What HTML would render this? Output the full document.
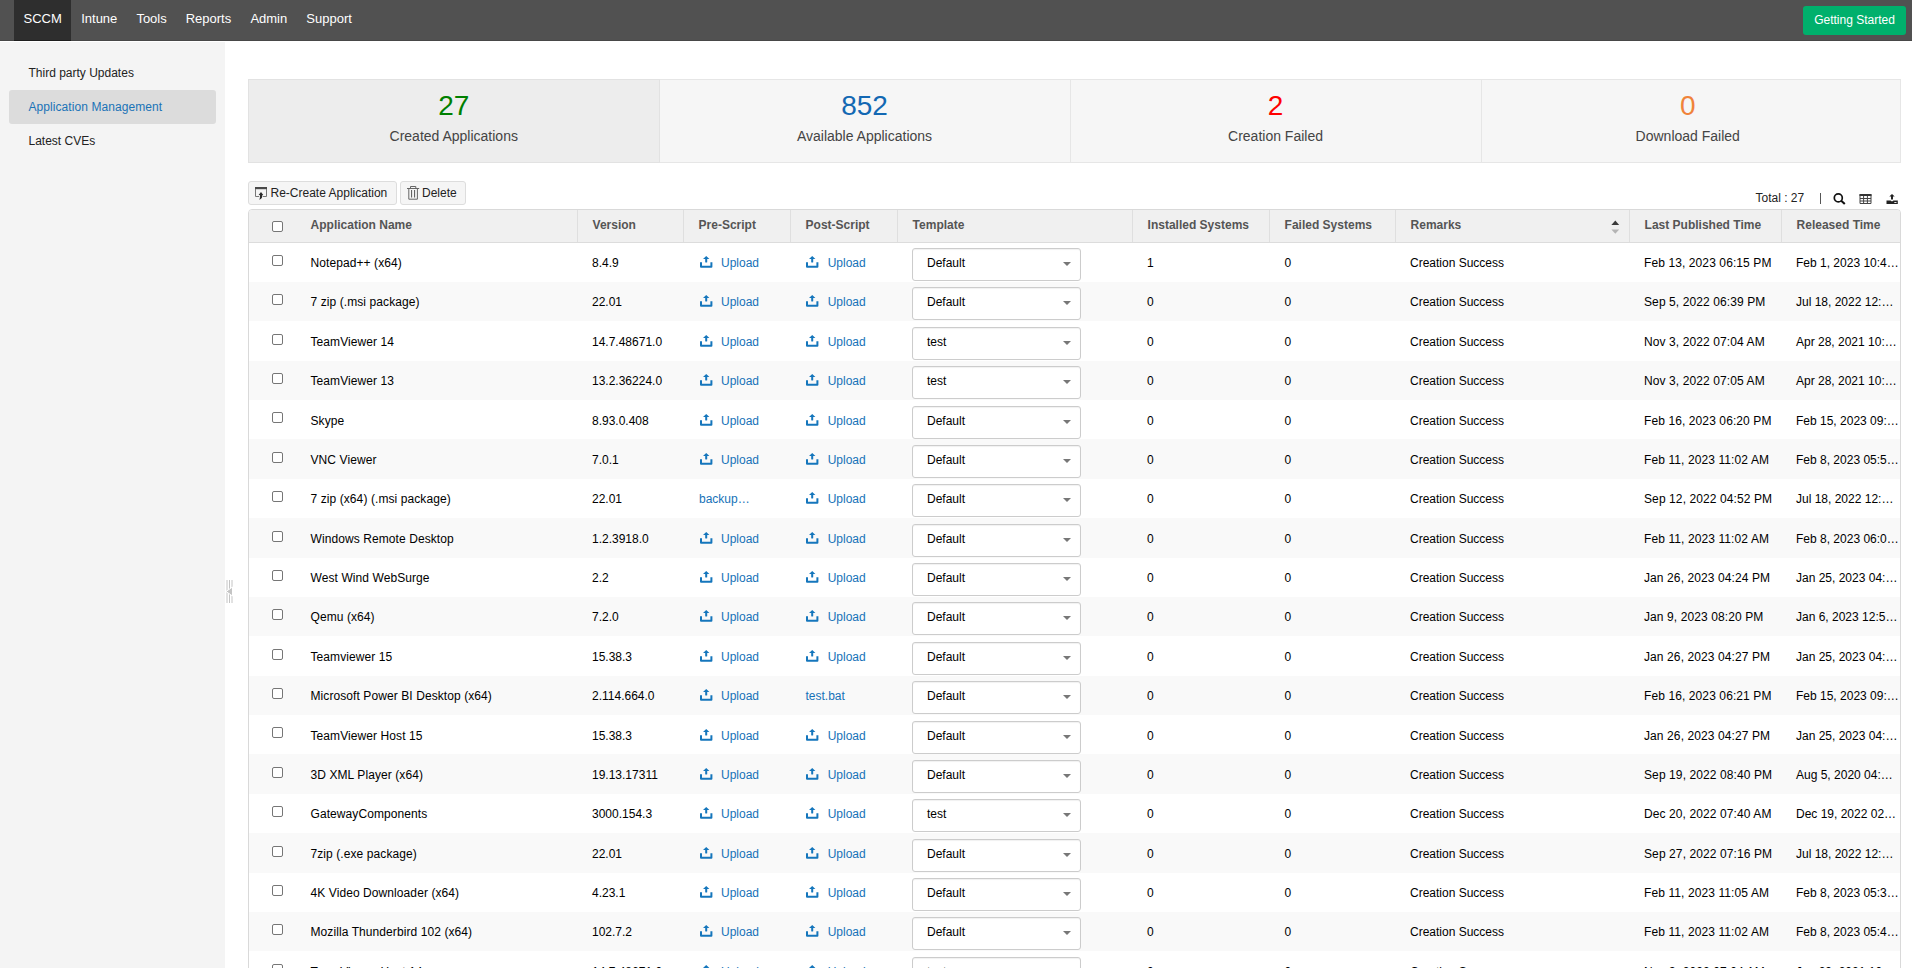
<!DOCTYPE html>
<html>
<head>
<meta charset="utf-8">
<title>Application Management</title>
<style>
*{box-sizing:border-box;margin:0;padding:0}
html,body{width:1912px;height:968px;overflow:hidden;background:#fff}
body{font-family:"Liberation Sans",sans-serif;font-size:12px;color:#111;position:relative}
.abs{position:absolute}
/* top bar */
#top{position:absolute;left:0;top:0;width:1912px;height:41px;background:#515151;border-bottom:1px solid #474747}
#top .tab{position:absolute;top:0;height:41px;line-height:38px;font-size:13px;color:#fff;white-space:nowrap}
#top .act{left:14px;width:57px;background:#2e2e2e;border-bottom:1px solid #1e1e1e}
#top .act span{position:absolute;left:9.5px}
#gs{position:absolute;left:1803px;top:6px;width:103px;height:29px;background:#00b06c;border-radius:3px;color:#fff;font-size:12px;line-height:29px;text-align:center}
/* sidebar */
#side{position:absolute;left:0;top:42px;width:225px;height:926px;background:#f4f4f4}
#side .it{position:absolute;left:9px;width:207px;height:34px;line-height:35px;padding-left:19.5px;color:#222;border-radius:3px}
#side .it.on{background:#dcdcdc;color:#1a73b7;letter-spacing:.07px}
/* splitter */
#split{position:absolute;left:226px;top:580px;width:7px;height:23px}
/* cards */
.card{position:absolute;top:79px;height:84px;background:#f6f6f6;border:1px solid #e6e6e6;border-left-width:0}
.card .n{position:absolute;left:0;right:0;top:9px;text-align:center;font-size:28px;line-height:34px}
.card .l{position:absolute;left:0;right:0;top:46px;text-align:center;font-size:14px;line-height:20px;color:#444}
/* buttons */
.btn{position:absolute;top:181px;height:24px;background:#f5f5f5;border:1px solid #ddd;border-radius:3px;line-height:22px;color:#222;white-space:nowrap}
/* table */
#tbl{position:absolute;left:248px;top:209px;width:1653px;height:780px;border:1px solid #d9d9d9;border-radius:4px 4px 0 0;overflow:hidden}
#hd{position:absolute;left:0;top:0;width:1651px;height:33px;background:#f0f0f0;border-bottom:1px solid #dcdcdc}
#hd .h{position:absolute;top:0;height:32px;line-height:31px;font-weight:bold;color:#555;padding-left:14.6px;border-left:1px solid #dfdfdf;white-space:nowrap}
#rows{position:absolute;left:0;top:32.51px;width:1651px}
.row{position:relative;height:39.375px;background:#fff;white-space:nowrap}
.row.odd{background:#f9f9f9}
.cb{position:absolute;left:23px;top:12.49px;width:11px;height:11px;border:1px solid #767676;border-radius:2px;background:#fff}
#hd .cb{top:11px}
.c{position:absolute;top:1.58px;height:39.375px;line-height:39.375px;color:#000}
.c1{left:61.5px}.c2{left:343px}.c3{left:450px}.c4{left:556.5px}
.c4 .up{left:0px}.c4 .ul{left:22.2px}
.c1{letter-spacing:.085px}.c9{letter-spacing:.1px}
.c6{left:898px}.c7{left:1035.5px}.c8{left:1161px}.c9{left:1395px}.c10{left:1547px}
.up{position:absolute;left:0.7px;top:11.95px}
.ul{position:absolute;left:22px;top:0;color:#1672b8}
.fl{color:#1672b8}
.sel{position:absolute;left:663px;top:5.6px;width:169px;height:33px;border:1px solid #ccc;border-radius:3px;background:#fff;box-shadow:inset 0 1px 1px rgba(0,0,0,.06)}
.sv{position:absolute;left:14px;top:-0.05px;line-height:28px;color:#000}
.ar{position:absolute;left:150px;top:13px;width:0;height:0;border-left:4px solid transparent;border-right:4px solid transparent;border-top:4px solid #777}
</style>
</head>
<body>
<div id="top">
  <div class="tab act"><span>SCCM</span></div>
  <div class="tab" style="left:81.2px">Intune</div>
  <div class="tab" style="left:136.4px">Tools</div>
  <div class="tab" style="left:185.7px">Reports</div>
  <div class="tab" style="left:250.4px">Admin</div>
  <div class="tab" style="left:306.3px">Support</div>
  <div id="gs">Getting Started</div>
</div>
<div id="side">
  <div class="it" style="top:14px">Third party Updates</div>
  <div class="it on" style="top:48px">Application Management</div>
  <div class="it" style="top:82px">Latest CVEs</div>
</div>
<svg id="split" viewBox="0 0 7 23"><path d="M1 0V23M3.5 0V23M6 0V23" stroke="#c4c4c4" stroke-width="1"/><path d="M0 11.5L6.5 7V16Z" fill="#c4c4c4" stroke="#fff" stroke-width="1"/></svg>

<div class="card" style="left:248px;width:411.5px;background:#ededed;border-left-width:1px;border-color:#e2e2e2"><div class="n" style="color:#008000">27</div><div class="l">Created Applications</div></div>
<div class="card" style="left:659.5px;width:411px"><div class="n" style="color:#1368b3">852</div><div class="l">Available Applications</div></div>
<div class="card" style="left:1070.5px;width:411px"><div class="n" style="color:#ff0000">2</div><div class="l">Creation Failed</div></div>
<div class="card" style="left:1481.5px;width:419.5px"><div class="n" style="color:#f0833a;right:6px">0</div><div class="l" style="right:6px">Download Failed</div></div>

<div class="btn" style="left:248px;width:149px"><svg class="abs" style="left:6px;top:5px" width="14" height="14" viewBox="0 0 14 14"><rect x="0" y="0" width="12" height="2.2" fill="#4a4a4a"/><path d="M0.5 2V9.5H4M8 9.5H11.5V2" fill="none" stroke="#777" stroke-width="1"/><path d="M3.6 7.9L6 5L8.3 7.9H7.3Q7.8 11.4 4.2 12.7Q5.3 10.8 4.9 7.9Z" fill="#2a2a2a"/></svg><span class="abs" style="left:21.5px;top:0">Re-Create Application</span></div>
<div class="btn" style="left:400px;width:66px"><svg class="abs" style="left:6px;top:3px" width="14" height="15" viewBox="0 0 14 15"><path d="M0 3.5H12.2M3.5 3.5V1.5H8.8V3.5M1.8 3.5V14.2H10.4V3.5" fill="none" stroke="#666" stroke-width="1"/><path d="M4.6 5V12.5M7.6 5V12.5" fill="none" stroke="#555" stroke-width="1"/></svg><span class="abs" style="left:21px;top:0">Delete</span></div>

<div class="abs" style="left:1755.5px;top:190px;line-height:16px;color:#222">Total : 27</div>
<div class="abs" style="left:1820px;top:193px;width:1px;height:11px;background:#555"></div>

<svg class="abs" style="left:1832px;top:192px" width="15" height="14" viewBox="0 0 15 14"><circle cx="6.3" cy="5.9" r="4" fill="none" stroke="#111" stroke-width="1.7"/><path d="M9.2 8.8L12.8 12" stroke="#111" stroke-width="2.1" stroke-linecap="butt"/></svg>
<svg class="abs" style="left:1859px;top:193px" width="14" height="12" viewBox="0 0 14 12"><rect x="0.5" y="1" width="12" height="2" fill="#333"/><path d="M1 1.5V10.5H12V1.5M1 5.5H12M1 8H12M4.6 3V10.5M8.4 3V10.5" fill="none" stroke="#444" stroke-width="1"/></svg>
<svg class="abs" style="left:1886px;top:193px" width="13" height="12" viewBox="0 0 13 12"><path d="M6 1L8.7 3.6H7V6.6H5V3.6H3.3Z" fill="#222"/><path d="M0.5 7.6H4.6L6 8.6L7.4 7.6H11.8V11H0.5Z" fill="#222"/><rect x="8.3" y="9" width="2.2" height="0.9" fill="#fff"/></svg>
<div id="tbl">
  <div id="hd">
    <i class="cb"></i>
    <div class="h" style="left:47px;width:281px;border-left:0">Application Name</div>
    <div class="h" style="left:328px;width:106px">Version</div>
    <div class="h" style="left:434px;width:107px">Pre-Script</div>
    <div class="h" style="left:541px;width:107px">Post-Script</div>
    <div class="h" style="left:648px;width:235px">Template</div>
    <div class="h" style="left:883px;width:137px">Installed Systems</div>
    <div class="h" style="left:1020px;width:126px">Failed Systems</div>
    <div class="h" style="left:1146px;width:234px">Remarks</div>
    <svg class="abs" style="left:1362px;top:10px" width="9" height="15" viewBox="0 0 9 15"><path d="M0.4 5L4.3 0.6L8.2 5Z" fill="#3a3a3a"/><path d="M0.4 9.6L4.3 13.8L8.2 9.6Z" fill="#b4b4b4"/></svg>
    <div class="h" style="left:1380px;width:152px">Last Published Time</div>
    <div class="h" style="left:1532px;width:119px">Released Time</div>
  </div>
  <div id="rows">
<div class="row"><i class="cb"></i><span class="c c1">Notepad++ (x64)</span><span class="c c2">8.4.9</span><span class="c c3"><svg class="up" viewBox="0 0 13 12" width="13" height="12"><path d="M1 6.2V10.8H11.4V6.2" fill="none" stroke="#1576bc" stroke-width="2" stroke-linejoin="round"/><path d="M6.2 0L9.4 3H7.2V6.2Q6.2 7 5.2 6.2V3H3Z" fill="#1576bc"/></svg><span class="ul">Upload</span></span><span class="c c4"><svg class="up" viewBox="0 0 13 12" width="13" height="12"><path d="M1 6.2V10.8H11.4V6.2" fill="none" stroke="#1576bc" stroke-width="2" stroke-linejoin="round"/><path d="M6.2 0L9.4 3H7.2V6.2Q6.2 7 5.2 6.2V3H3Z" fill="#1576bc"/></svg><span class="ul">Upload</span></span><span class="sel"><span class="sv">Default</span><i class="ar"></i></span><span class="c c6">1</span><span class="c c7">0</span><span class="c c8">Creation Success</span><span class="c c9">Feb 13, 2023 06:15 PM</span><span class="c c10">Feb 1, 2023 10:4…</span></div>
<div class="row odd"><i class="cb"></i><span class="c c1">7 zip (.msi package)</span><span class="c c2">22.01</span><span class="c c3"><svg class="up" viewBox="0 0 13 12" width="13" height="12"><path d="M1 6.2V10.8H11.4V6.2" fill="none" stroke="#1576bc" stroke-width="2" stroke-linejoin="round"/><path d="M6.2 0L9.4 3H7.2V6.2Q6.2 7 5.2 6.2V3H3Z" fill="#1576bc"/></svg><span class="ul">Upload</span></span><span class="c c4"><svg class="up" viewBox="0 0 13 12" width="13" height="12"><path d="M1 6.2V10.8H11.4V6.2" fill="none" stroke="#1576bc" stroke-width="2" stroke-linejoin="round"/><path d="M6.2 0L9.4 3H7.2V6.2Q6.2 7 5.2 6.2V3H3Z" fill="#1576bc"/></svg><span class="ul">Upload</span></span><span class="sel"><span class="sv">Default</span><i class="ar"></i></span><span class="c c6">0</span><span class="c c7">0</span><span class="c c8">Creation Success</span><span class="c c9">Sep 5, 2022 06:39 PM</span><span class="c c10">Jul 18, 2022 12:…</span></div>
<div class="row"><i class="cb"></i><span class="c c1">TeamViewer 14</span><span class="c c2">14.7.48671.0</span><span class="c c3"><svg class="up" viewBox="0 0 13 12" width="13" height="12"><path d="M1 6.2V10.8H11.4V6.2" fill="none" stroke="#1576bc" stroke-width="2" stroke-linejoin="round"/><path d="M6.2 0L9.4 3H7.2V6.2Q6.2 7 5.2 6.2V3H3Z" fill="#1576bc"/></svg><span class="ul">Upload</span></span><span class="c c4"><svg class="up" viewBox="0 0 13 12" width="13" height="12"><path d="M1 6.2V10.8H11.4V6.2" fill="none" stroke="#1576bc" stroke-width="2" stroke-linejoin="round"/><path d="M6.2 0L9.4 3H7.2V6.2Q6.2 7 5.2 6.2V3H3Z" fill="#1576bc"/></svg><span class="ul">Upload</span></span><span class="sel"><span class="sv">test</span><i class="ar"></i></span><span class="c c6">0</span><span class="c c7">0</span><span class="c c8">Creation Success</span><span class="c c9">Nov 3, 2022 07:04 AM</span><span class="c c10">Apr 28, 2021 10:…</span></div>
<div class="row odd"><i class="cb"></i><span class="c c1">TeamViewer 13</span><span class="c c2">13.2.36224.0</span><span class="c c3"><svg class="up" viewBox="0 0 13 12" width="13" height="12"><path d="M1 6.2V10.8H11.4V6.2" fill="none" stroke="#1576bc" stroke-width="2" stroke-linejoin="round"/><path d="M6.2 0L9.4 3H7.2V6.2Q6.2 7 5.2 6.2V3H3Z" fill="#1576bc"/></svg><span class="ul">Upload</span></span><span class="c c4"><svg class="up" viewBox="0 0 13 12" width="13" height="12"><path d="M1 6.2V10.8H11.4V6.2" fill="none" stroke="#1576bc" stroke-width="2" stroke-linejoin="round"/><path d="M6.2 0L9.4 3H7.2V6.2Q6.2 7 5.2 6.2V3H3Z" fill="#1576bc"/></svg><span class="ul">Upload</span></span><span class="sel"><span class="sv">test</span><i class="ar"></i></span><span class="c c6">0</span><span class="c c7">0</span><span class="c c8">Creation Success</span><span class="c c9">Nov 3, 2022 07:05 AM</span><span class="c c10">Apr 28, 2021 10:…</span></div>
<div class="row"><i class="cb"></i><span class="c c1">Skype</span><span class="c c2">8.93.0.408</span><span class="c c3"><svg class="up" viewBox="0 0 13 12" width="13" height="12"><path d="M1 6.2V10.8H11.4V6.2" fill="none" stroke="#1576bc" stroke-width="2" stroke-linejoin="round"/><path d="M6.2 0L9.4 3H7.2V6.2Q6.2 7 5.2 6.2V3H3Z" fill="#1576bc"/></svg><span class="ul">Upload</span></span><span class="c c4"><svg class="up" viewBox="0 0 13 12" width="13" height="12"><path d="M1 6.2V10.8H11.4V6.2" fill="none" stroke="#1576bc" stroke-width="2" stroke-linejoin="round"/><path d="M6.2 0L9.4 3H7.2V6.2Q6.2 7 5.2 6.2V3H3Z" fill="#1576bc"/></svg><span class="ul">Upload</span></span><span class="sel"><span class="sv">Default</span><i class="ar"></i></span><span class="c c6">0</span><span class="c c7">0</span><span class="c c8">Creation Success</span><span class="c c9">Feb 16, 2023 06:20 PM</span><span class="c c10">Feb 15, 2023 09:…</span></div>
<div class="row odd"><i class="cb"></i><span class="c c1">VNC Viewer</span><span class="c c2">7.0.1</span><span class="c c3"><svg class="up" viewBox="0 0 13 12" width="13" height="12"><path d="M1 6.2V10.8H11.4V6.2" fill="none" stroke="#1576bc" stroke-width="2" stroke-linejoin="round"/><path d="M6.2 0L9.4 3H7.2V6.2Q6.2 7 5.2 6.2V3H3Z" fill="#1576bc"/></svg><span class="ul">Upload</span></span><span class="c c4"><svg class="up" viewBox="0 0 13 12" width="13" height="12"><path d="M1 6.2V10.8H11.4V6.2" fill="none" stroke="#1576bc" stroke-width="2" stroke-linejoin="round"/><path d="M6.2 0L9.4 3H7.2V6.2Q6.2 7 5.2 6.2V3H3Z" fill="#1576bc"/></svg><span class="ul">Upload</span></span><span class="sel"><span class="sv">Default</span><i class="ar"></i></span><span class="c c6">0</span><span class="c c7">0</span><span class="c c8">Creation Success</span><span class="c c9">Feb 11, 2023 11:02 AM</span><span class="c c10">Feb 8, 2023 05:5…</span></div>
<div class="row"><i class="cb"></i><span class="c c1">7 zip (x64) (.msi package)</span><span class="c c2">22.01</span><span class="c c3"><span class="fl">backup…</span></span><span class="c c4"><svg class="up" viewBox="0 0 13 12" width="13" height="12"><path d="M1 6.2V10.8H11.4V6.2" fill="none" stroke="#1576bc" stroke-width="2" stroke-linejoin="round"/><path d="M6.2 0L9.4 3H7.2V6.2Q6.2 7 5.2 6.2V3H3Z" fill="#1576bc"/></svg><span class="ul">Upload</span></span><span class="sel"><span class="sv">Default</span><i class="ar"></i></span><span class="c c6">0</span><span class="c c7">0</span><span class="c c8">Creation Success</span><span class="c c9">Sep 12, 2022 04:52 PM</span><span class="c c10">Jul 18, 2022 12:…</span></div>
<div class="row odd"><i class="cb"></i><span class="c c1">Windows Remote Desktop</span><span class="c c2">1.2.3918.0</span><span class="c c3"><svg class="up" viewBox="0 0 13 12" width="13" height="12"><path d="M1 6.2V10.8H11.4V6.2" fill="none" stroke="#1576bc" stroke-width="2" stroke-linejoin="round"/><path d="M6.2 0L9.4 3H7.2V6.2Q6.2 7 5.2 6.2V3H3Z" fill="#1576bc"/></svg><span class="ul">Upload</span></span><span class="c c4"><svg class="up" viewBox="0 0 13 12" width="13" height="12"><path d="M1 6.2V10.8H11.4V6.2" fill="none" stroke="#1576bc" stroke-width="2" stroke-linejoin="round"/><path d="M6.2 0L9.4 3H7.2V6.2Q6.2 7 5.2 6.2V3H3Z" fill="#1576bc"/></svg><span class="ul">Upload</span></span><span class="sel"><span class="sv">Default</span><i class="ar"></i></span><span class="c c6">0</span><span class="c c7">0</span><span class="c c8">Creation Success</span><span class="c c9">Feb 11, 2023 11:02 AM</span><span class="c c10">Feb 8, 2023 06:0…</span></div>
<div class="row"><i class="cb"></i><span class="c c1">West Wind WebSurge</span><span class="c c2">2.2</span><span class="c c3"><svg class="up" viewBox="0 0 13 12" width="13" height="12"><path d="M1 6.2V10.8H11.4V6.2" fill="none" stroke="#1576bc" stroke-width="2" stroke-linejoin="round"/><path d="M6.2 0L9.4 3H7.2V6.2Q6.2 7 5.2 6.2V3H3Z" fill="#1576bc"/></svg><span class="ul">Upload</span></span><span class="c c4"><svg class="up" viewBox="0 0 13 12" width="13" height="12"><path d="M1 6.2V10.8H11.4V6.2" fill="none" stroke="#1576bc" stroke-width="2" stroke-linejoin="round"/><path d="M6.2 0L9.4 3H7.2V6.2Q6.2 7 5.2 6.2V3H3Z" fill="#1576bc"/></svg><span class="ul">Upload</span></span><span class="sel"><span class="sv">Default</span><i class="ar"></i></span><span class="c c6">0</span><span class="c c7">0</span><span class="c c8">Creation Success</span><span class="c c9">Jan 26, 2023 04:24 PM</span><span class="c c10">Jan 25, 2023 04:…</span></div>
<div class="row odd"><i class="cb"></i><span class="c c1">Qemu (x64)</span><span class="c c2">7.2.0</span><span class="c c3"><svg class="up" viewBox="0 0 13 12" width="13" height="12"><path d="M1 6.2V10.8H11.4V6.2" fill="none" stroke="#1576bc" stroke-width="2" stroke-linejoin="round"/><path d="M6.2 0L9.4 3H7.2V6.2Q6.2 7 5.2 6.2V3H3Z" fill="#1576bc"/></svg><span class="ul">Upload</span></span><span class="c c4"><svg class="up" viewBox="0 0 13 12" width="13" height="12"><path d="M1 6.2V10.8H11.4V6.2" fill="none" stroke="#1576bc" stroke-width="2" stroke-linejoin="round"/><path d="M6.2 0L9.4 3H7.2V6.2Q6.2 7 5.2 6.2V3H3Z" fill="#1576bc"/></svg><span class="ul">Upload</span></span><span class="sel"><span class="sv">Default</span><i class="ar"></i></span><span class="c c6">0</span><span class="c c7">0</span><span class="c c8">Creation Success</span><span class="c c9">Jan 9, 2023 08:20 PM</span><span class="c c10">Jan 6, 2023 12:5…</span></div>
<div class="row"><i class="cb"></i><span class="c c1">Teamviewer 15</span><span class="c c2">15.38.3</span><span class="c c3"><svg class="up" viewBox="0 0 13 12" width="13" height="12"><path d="M1 6.2V10.8H11.4V6.2" fill="none" stroke="#1576bc" stroke-width="2" stroke-linejoin="round"/><path d="M6.2 0L9.4 3H7.2V6.2Q6.2 7 5.2 6.2V3H3Z" fill="#1576bc"/></svg><span class="ul">Upload</span></span><span class="c c4"><svg class="up" viewBox="0 0 13 12" width="13" height="12"><path d="M1 6.2V10.8H11.4V6.2" fill="none" stroke="#1576bc" stroke-width="2" stroke-linejoin="round"/><path d="M6.2 0L9.4 3H7.2V6.2Q6.2 7 5.2 6.2V3H3Z" fill="#1576bc"/></svg><span class="ul">Upload</span></span><span class="sel"><span class="sv">Default</span><i class="ar"></i></span><span class="c c6">0</span><span class="c c7">0</span><span class="c c8">Creation Success</span><span class="c c9">Jan 26, 2023 04:27 PM</span><span class="c c10">Jan 25, 2023 04:…</span></div>
<div class="row odd"><i class="cb"></i><span class="c c1">Microsoft Power BI Desktop (x64)</span><span class="c c2">2.114.664.0</span><span class="c c3"><svg class="up" viewBox="0 0 13 12" width="13" height="12"><path d="M1 6.2V10.8H11.4V6.2" fill="none" stroke="#1576bc" stroke-width="2" stroke-linejoin="round"/><path d="M6.2 0L9.4 3H7.2V6.2Q6.2 7 5.2 6.2V3H3Z" fill="#1576bc"/></svg><span class="ul">Upload</span></span><span class="c c4"><span class="fl">test.bat</span></span><span class="sel"><span class="sv">Default</span><i class="ar"></i></span><span class="c c6">0</span><span class="c c7">0</span><span class="c c8">Creation Success</span><span class="c c9">Feb 16, 2023 06:21 PM</span><span class="c c10">Feb 15, 2023 09:…</span></div>
<div class="row"><i class="cb"></i><span class="c c1">TeamViewer Host 15</span><span class="c c2">15.38.3</span><span class="c c3"><svg class="up" viewBox="0 0 13 12" width="13" height="12"><path d="M1 6.2V10.8H11.4V6.2" fill="none" stroke="#1576bc" stroke-width="2" stroke-linejoin="round"/><path d="M6.2 0L9.4 3H7.2V6.2Q6.2 7 5.2 6.2V3H3Z" fill="#1576bc"/></svg><span class="ul">Upload</span></span><span class="c c4"><svg class="up" viewBox="0 0 13 12" width="13" height="12"><path d="M1 6.2V10.8H11.4V6.2" fill="none" stroke="#1576bc" stroke-width="2" stroke-linejoin="round"/><path d="M6.2 0L9.4 3H7.2V6.2Q6.2 7 5.2 6.2V3H3Z" fill="#1576bc"/></svg><span class="ul">Upload</span></span><span class="sel"><span class="sv">Default</span><i class="ar"></i></span><span class="c c6">0</span><span class="c c7">0</span><span class="c c8">Creation Success</span><span class="c c9">Jan 26, 2023 04:27 PM</span><span class="c c10">Jan 25, 2023 04:…</span></div>
<div class="row odd"><i class="cb"></i><span class="c c1">3D XML Player (x64)</span><span class="c c2">19.13.17311</span><span class="c c3"><svg class="up" viewBox="0 0 13 12" width="13" height="12"><path d="M1 6.2V10.8H11.4V6.2" fill="none" stroke="#1576bc" stroke-width="2" stroke-linejoin="round"/><path d="M6.2 0L9.4 3H7.2V6.2Q6.2 7 5.2 6.2V3H3Z" fill="#1576bc"/></svg><span class="ul">Upload</span></span><span class="c c4"><svg class="up" viewBox="0 0 13 12" width="13" height="12"><path d="M1 6.2V10.8H11.4V6.2" fill="none" stroke="#1576bc" stroke-width="2" stroke-linejoin="round"/><path d="M6.2 0L9.4 3H7.2V6.2Q6.2 7 5.2 6.2V3H3Z" fill="#1576bc"/></svg><span class="ul">Upload</span></span><span class="sel"><span class="sv">Default</span><i class="ar"></i></span><span class="c c6">0</span><span class="c c7">0</span><span class="c c8">Creation Success</span><span class="c c9">Sep 19, 2022 08:40 PM</span><span class="c c10">Aug 5, 2020 04:…</span></div>
<div class="row"><i class="cb"></i><span class="c c1">GatewayComponents</span><span class="c c2">3000.154.3</span><span class="c c3"><svg class="up" viewBox="0 0 13 12" width="13" height="12"><path d="M1 6.2V10.8H11.4V6.2" fill="none" stroke="#1576bc" stroke-width="2" stroke-linejoin="round"/><path d="M6.2 0L9.4 3H7.2V6.2Q6.2 7 5.2 6.2V3H3Z" fill="#1576bc"/></svg><span class="ul">Upload</span></span><span class="c c4"><svg class="up" viewBox="0 0 13 12" width="13" height="12"><path d="M1 6.2V10.8H11.4V6.2" fill="none" stroke="#1576bc" stroke-width="2" stroke-linejoin="round"/><path d="M6.2 0L9.4 3H7.2V6.2Q6.2 7 5.2 6.2V3H3Z" fill="#1576bc"/></svg><span class="ul">Upload</span></span><span class="sel"><span class="sv">test</span><i class="ar"></i></span><span class="c c6">0</span><span class="c c7">0</span><span class="c c8">Creation Success</span><span class="c c9">Dec 20, 2022 07:40 AM</span><span class="c c10">Dec 19, 2022 02…</span></div>
<div class="row odd"><i class="cb"></i><span class="c c1">7zip (.exe package)</span><span class="c c2">22.01</span><span class="c c3"><svg class="up" viewBox="0 0 13 12" width="13" height="12"><path d="M1 6.2V10.8H11.4V6.2" fill="none" stroke="#1576bc" stroke-width="2" stroke-linejoin="round"/><path d="M6.2 0L9.4 3H7.2V6.2Q6.2 7 5.2 6.2V3H3Z" fill="#1576bc"/></svg><span class="ul">Upload</span></span><span class="c c4"><svg class="up" viewBox="0 0 13 12" width="13" height="12"><path d="M1 6.2V10.8H11.4V6.2" fill="none" stroke="#1576bc" stroke-width="2" stroke-linejoin="round"/><path d="M6.2 0L9.4 3H7.2V6.2Q6.2 7 5.2 6.2V3H3Z" fill="#1576bc"/></svg><span class="ul">Upload</span></span><span class="sel"><span class="sv">Default</span><i class="ar"></i></span><span class="c c6">0</span><span class="c c7">0</span><span class="c c8">Creation Success</span><span class="c c9">Sep 27, 2022 07:16 PM</span><span class="c c10">Jul 18, 2022 12:…</span></div>
<div class="row"><i class="cb"></i><span class="c c1">4K Video Downloader (x64)</span><span class="c c2">4.23.1</span><span class="c c3"><svg class="up" viewBox="0 0 13 12" width="13" height="12"><path d="M1 6.2V10.8H11.4V6.2" fill="none" stroke="#1576bc" stroke-width="2" stroke-linejoin="round"/><path d="M6.2 0L9.4 3H7.2V6.2Q6.2 7 5.2 6.2V3H3Z" fill="#1576bc"/></svg><span class="ul">Upload</span></span><span class="c c4"><svg class="up" viewBox="0 0 13 12" width="13" height="12"><path d="M1 6.2V10.8H11.4V6.2" fill="none" stroke="#1576bc" stroke-width="2" stroke-linejoin="round"/><path d="M6.2 0L9.4 3H7.2V6.2Q6.2 7 5.2 6.2V3H3Z" fill="#1576bc"/></svg><span class="ul">Upload</span></span><span class="sel"><span class="sv">Default</span><i class="ar"></i></span><span class="c c6">0</span><span class="c c7">0</span><span class="c c8">Creation Success</span><span class="c c9">Feb 11, 2023 11:05 AM</span><span class="c c10">Feb 8, 2023 05:3…</span></div>
<div class="row odd"><i class="cb"></i><span class="c c1">Mozilla Thunderbird 102 (x64)</span><span class="c c2">102.7.2</span><span class="c c3"><svg class="up" viewBox="0 0 13 12" width="13" height="12"><path d="M1 6.2V10.8H11.4V6.2" fill="none" stroke="#1576bc" stroke-width="2" stroke-linejoin="round"/><path d="M6.2 0L9.4 3H7.2V6.2Q6.2 7 5.2 6.2V3H3Z" fill="#1576bc"/></svg><span class="ul">Upload</span></span><span class="c c4"><svg class="up" viewBox="0 0 13 12" width="13" height="12"><path d="M1 6.2V10.8H11.4V6.2" fill="none" stroke="#1576bc" stroke-width="2" stroke-linejoin="round"/><path d="M6.2 0L9.4 3H7.2V6.2Q6.2 7 5.2 6.2V3H3Z" fill="#1576bc"/></svg><span class="ul">Upload</span></span><span class="sel"><span class="sv">Default</span><i class="ar"></i></span><span class="c c6">0</span><span class="c c7">0</span><span class="c c8">Creation Success</span><span class="c c9">Feb 11, 2023 11:02 AM</span><span class="c c10">Feb 8, 2023 05:4…</span></div>
<div class="row"><i class="cb"></i><span class="c c1">TeamViewer Host 14</span><span class="c c2">14.7.48671.0</span><span class="c c3"><svg class="up" viewBox="0 0 13 12" width="13" height="12"><path d="M1 6.2V10.8H11.4V6.2" fill="none" stroke="#1576bc" stroke-width="2" stroke-linejoin="round"/><path d="M6.2 0L9.4 3H7.2V6.2Q6.2 7 5.2 6.2V3H3Z" fill="#1576bc"/></svg><span class="ul">Upload</span></span><span class="c c4"><svg class="up" viewBox="0 0 13 12" width="13" height="12"><path d="M1 6.2V10.8H11.4V6.2" fill="none" stroke="#1576bc" stroke-width="2" stroke-linejoin="round"/><path d="M6.2 0L9.4 3H7.2V6.2Q6.2 7 5.2 6.2V3H3Z" fill="#1576bc"/></svg><span class="ul">Upload</span></span><span class="sel"><span class="sv">test</span><i class="ar"></i></span><span class="c c6">0</span><span class="c c7">0</span><span class="c c8">Creation Success</span><span class="c c9">Nov 3, 2022 07:04 AM</span><span class="c c10">Jan 29, 2021 10:…</span></div>
  </div>
</div>
</body>
</html>
